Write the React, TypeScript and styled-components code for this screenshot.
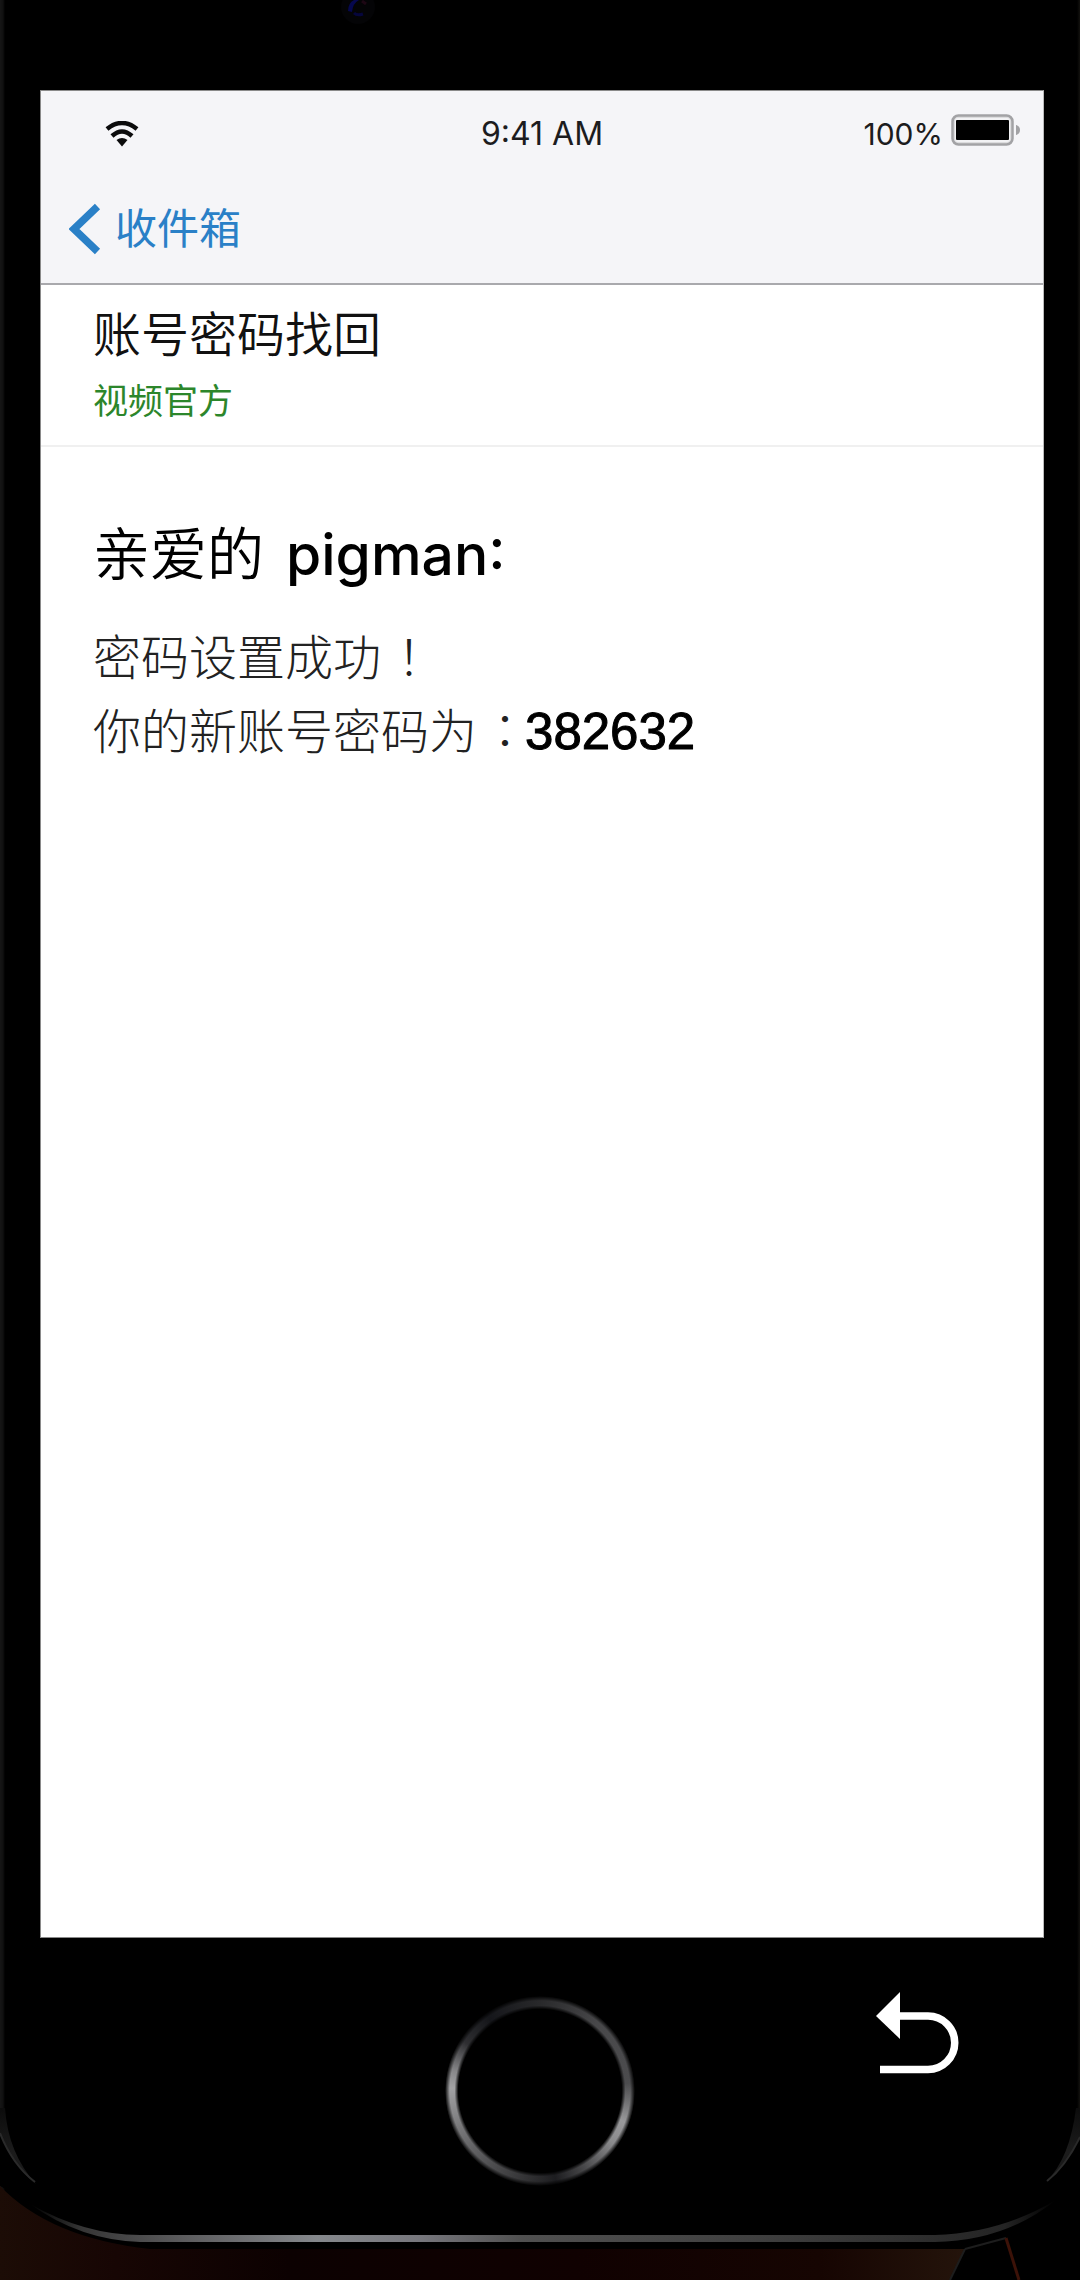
import React from "react";
import styled, { createGlobalStyle } from "styled-components";

const GlobalStyle = createGlobalStyle`
  *, *::before, *::after { box-sizing: border-box; }
  html, body { margin: 0; background: #000; }
  body { font-family: Inter, "Noto Sans CJK SC", sans-serif; }
  h1, h2, p { margin: 0; }
  button { appearance: none; border: 0; padding: 0; background: none; cursor: pointer; font: inherit; }
  svg { display: block; }
`;

const Phone = styled.div`
  display: flex;
  flex-direction: column;
  min-height: 100vh;
  background: linear-gradient(90deg, #161616 0, #101010 3px, #000 5px, #000 calc(100% - 3px), #13120f 100%);
`;

const TopBezel = styled.div`
  height: 90px;
  padding-left: 31%;
  flex: none;
`;

const Screen = styled.main`
  flex: 1;
  margin: 0 36px 0 40px;
  border: 1px solid #8a8a8a;
  border-right-color: #bbb;
  background: #fff;
`;

const Header = styled.header`
  background: #f5f5f8;
  border-bottom: 2px solid #a9a9ad;
`;

const StatusBar = styled.div`
  display: grid;
  grid-template-columns: 1fr auto 1fr;
  align-items: center;
  height: 86px;
  padding: 0 22px 0 64px;
  color: #1c1c1e;
  font-size: 32px;
  line-height: 40px;
`;

const Clock = styled.time`
  padding-right: 42px;
`;

const Power = styled.div`
  display: flex;
  align-items: flex-start;
  justify-content: flex-end;
  gap: 8px;
  font-size: 30px;
`;

const NavBar = styled.nav`
  display: flex;
  align-items: center;
  height: 106px;
  padding: 0 28px 2px;
`;

const BackButton = styled.button`
  display: flex;
  align-items: center;
  gap: 14px;
  color: #2a80c7;
  font-size: 42px;
  line-height: 56px;
`;

const Subject = styled.section`
  padding: 14px 52px 18px;
  border-bottom: 2px solid #f0f0f0;
`;

const SubjectTitle = styled.h1`
  color: #111;
  font-size: 48px;
  font-weight: 350;
  line-height: 72px;
`;

const Sender = styled.p`
  padding-top: 4px;
  color: #2c862b;
  font-size: 35px;
  line-height: 52px;
`;

const Message = styled.article`
  padding: 66px 52px 0;
`;

const Greeting = styled.h2`
  display: flex;
  gap: 22px;
  color: #000;
  font-size: 57px;
  font-weight: 350;
  line-height: 84px;
`;

const Name = styled.span`
  font-weight: 500;
  font-feature-settings: "case";
`;

const Lines = styled.div`
  padding-top: 24px;
`;

const Line = styled.p`
  color: #222;
  font-size: 48px;
  font-weight: 300;
  line-height: 74px;
`;

const Mark = styled.span`
  margin: 0 -4px 0 4px;
  font-family: "Noto Sans CJK TC", sans-serif;
  line-height: 1;
`;

const Code = styled.strong`
  color: #000;
  font-family: "Liberation Sans", Arial, sans-serif;
  font-size: 51px;
  font-weight: 400;
  line-height: 1;
  -webkit-text-stroke: 1px #000;
`;

const BottomBezel = styled.footer`
  position: relative;
  flex: none;
  display: grid;
  grid-template-columns: 1fr auto 1fr;
  align-items: start;
  height: 342px;
  padding-top: 54px;
`;

const Edge = styled.svg`
  position: absolute;
  inset: 0;
  width: 100%;
  height: 100%;
`;

const HomeButton = styled.button`
  position: relative;
  grid-column: 2;
  width: 198px;
  height: 198px;
  border-radius: 50%;
`;

const Ring = styled.span`
  display: block;
  width: 190px;
  height: 190px;
  margin: 0 auto;
  border-radius: 50%;
  background: conic-gradient(
    #29292b 0deg, #48484a 40deg, #4c4c4e 85deg, #99999b 110deg, #8c8c8e 125deg,
    #48484a 150deg, #1d1d20 170deg, #2e2e30 185deg, #505052 215deg, #777779 245deg,
    #a2a2a4 272deg, #88888a 283deg, #2e2e31 303deg, #15161a 325deg, #29292b 360deg
  );
  mask: radial-gradient(circle closest-side, transparent 86%, #000 90%, #000 95%, transparent 100%);
`;

const UndoButton = styled.button`
  position: relative;
  grid-column: 3;
  justify-self: end;
  margin-right: 120px;
`;

const Camera = () => (
  <svg width="48" height="26" viewBox="0 0 48 26" aria-hidden="true">
    <circle cx="23" cy="7" r="17" fill="#040406" />
    <path d="M13 11Q13 3 19 0H24Q18 3 17 12Z" fill="#06084e" />
    <path d="M19 13Q22 16 28 14" stroke="#06063c" strokeWidth="3" fill="none" />
    <path d="M27 1L31 4" stroke="#1d0714" strokeWidth="3" />
  </svg>
);

const Wifi = () => (
  <svg width="34" height="26" viewBox="0 0 34 26" role="img" aria-label="Wi-Fi">
    <path d="M2 8Q17-4 32 8" fill="none" stroke="#0b0b0c" strokeWidth="4.500" />
    <path d="M7 15Q17 6 27 15" fill="none" stroke="#0b0b0c" strokeWidth="4.500" />
    <path d="M11.500 19Q17 15 22.500 19L17 25.500Z" fill="#0b0b0c" />
  </svg>
);

const Battery = () => (
  <svg width="70" height="32" viewBox="0 0 70 32" role="img" aria-label="Battery">
    <rect x="1.500" y="1.500" width="60" height="29" rx="6" fill="#dcdcde" stroke="#a2a2a5" strokeWidth="2.500" />
    <rect x="4" y="4" width="55" height="24" rx="3" fill="#f2f2f4" />
    <rect x="5" y="6" width="53" height="20" rx="1" fill="#000" />
    <path d="M65 11Q69 12 69 16T65 21Z" fill="#a2a2a5" />
  </svg>
);

const Chevron = () => (
  <svg width="32" height="52" viewBox="0 0 32 52" aria-hidden="true">
    <path d="M28.500 3.500L5 26L28.500 48.500" fill="none" stroke="#2a80c7" strokeWidth="7.500" />
  </svg>
);

const UndoArrow = () => (
  <svg width="84" height="82" viewBox="0 0 84 82" aria-hidden="true">
    <path d="M0 24L24 0V47Z" fill="#fff" />
    <path d="M22 24H52A26.750 26.750 0 0 1 52 77.500H4" fill="none" stroke="#fff" strokeWidth="7.500" />
  </svg>
);

const PhoneEdge = () => (
  <Edge viewBox="0 0 1080 342" preserveAspectRatio="none" aria-hidden="true">
    <defs>
      <linearGradient id="backdrop">
        <stop offset="0" stopColor="#1c0c06" />
        <stop offset="0.120" stopColor="#170604" />
        <stop offset="0.300" stopColor="#0c0101" />
        <stop offset="0.600" stopColor="#100101" />
        <stop offset="0.850" stopColor="#160502" />
        <stop offset="1" stopColor="#24140b" />
      </linearGradient>
      <linearGradient id="rim" gradientUnits="userSpaceOnUse" x1="30" y1="0" x2="1056" y2="0">
        <stop offset="0" stopColor="#000" />
        <stop offset="0.050" stopColor="#353535" />
        <stop offset="0.150" stopColor="#5c5c5e" />
        <stop offset="0.280" stopColor="#85888c" />
        <stop offset="0.380" stopColor="#77777d" />
        <stop offset="0.480" stopColor="#505050" />
        <stop offset="0.700" stopColor="#404040" />
        <stop offset="0.850" stopColor="#303030" />
        <stop offset="0.950" stopColor="#242424" />
        <stop offset="1" stopColor="#000" />
      </linearGradient>
      <linearGradient id="glint" x1="0" y1="0" x2="0" y2="1">
        <stop offset="0" stopColor="#0c0c0c" />
        <stop offset="0.600" stopColor="#1c1c1c" />
        <stop offset="1" stopColor="#161616" />
      </linearGradient>
    </defs>
    <path d="M0 195Q12 226 36 246L60 280L0 248Z" fill="#000" />
    <path d="M1080 199Q1068 226 1046 244L1020 342H1080Z" fill="#000" />
    <path d="M0 248Q50 300 150 311H965L950 342H0Z" fill="url(#backdrop)" />
    <path d="M965 311L1006 300" stroke="#1d1d1d" strokeWidth="2" />
    <path d="M965 311L950 342" stroke="#1d1d1d" strokeWidth="2" />
    <path d="M1006 300L1019 342" stroke="#3c1208" strokeWidth="3" />
    <path d="M30 266Q85 297 140 297H935Q1000 295 1056 262Q1005 303 935 304H140Q80 302 30 266Z" fill="url(#rim)" />
    <path d="M0 170H5Q8 215 36 246Q12 228 0 195Z" fill="url(#glint)" />
    <path d="M0 195Q12 226 35 244" fill="none" stroke="#2a2a2a" strokeWidth="2" />
    <path d="M1080 170H1076Q1070 220 1046 244Q1068 226 1080 199Z" fill="url(#glint)" />
    <path d="M1080 199Q1066 228 1047 243" fill="none" stroke="#2a2a2a" strokeWidth="2" />
  </Edge>
);

export default function App() {
  return (
    <>
      <GlobalStyle />
      <Phone lang="zh-CN">
        <TopBezel>
          <Camera />
        </TopBezel>
        <Screen>
          <Header>
            <StatusBar>
              <Wifi />
              <Clock>9:41 AM</Clock>
              <Power>
                <span>100%</span>
                <Battery />
              </Power>
            </StatusBar>
            <NavBar>
              <BackButton type="button">
                <Chevron />
                收件箱
              </BackButton>
            </NavBar>
          </Header>
          <Subject>
            <SubjectTitle>账号密码找回</SubjectTitle>
            <Sender>视频官方</Sender>
          </Subject>
          <Message>
            <Greeting>
              <span>亲爱的</span>
              <Name>pigman:</Name>
            </Greeting>
            <Lines>
              <Line>
                密码设置成功<Mark lang="zh-TW">！</Mark>
              </Line>
              <Line>
                你的新账号密码为<Mark lang="zh-TW">：</Mark>
                <Code>382632</Code>
              </Line>
            </Lines>
          </Message>
        </Screen>
        <BottomBezel>
          <PhoneEdge />
          <HomeButton type="button" aria-label="主屏幕">
            <Ring />
          </HomeButton>
          <UndoButton type="button" aria-label="返回">
            <UndoArrow />
          </UndoButton>
        </BottomBezel>
      </Phone>
    </>
  );
}
